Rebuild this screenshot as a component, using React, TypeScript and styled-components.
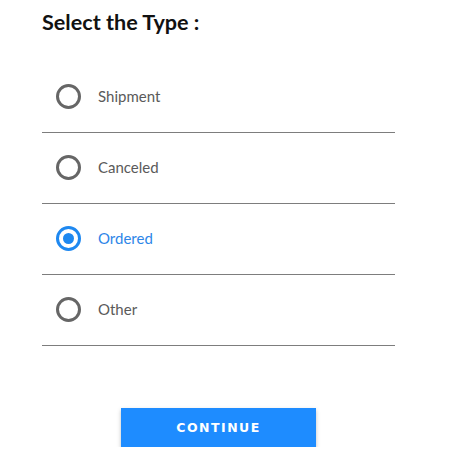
import { useState } from "react";
import styled, { createGlobalStyle } from "styled-components";

const GlobalStyle = createGlobalStyle`
  body {
    margin: 0;
    background: #ffffff;
    font-family: Lato, "Open Sans", sans-serif;
  }
`;

const Page = styled.div`
  padding: 8px 0 0 42px;
  width: 353px;
`;

const Title = styled.h2`
  margin: 0;
  font-size: 21.6px;
  font-weight: 700;
  color: #111111;
  line-height: 28px;
`;

const List = styled.div`
  margin-top: 26px;
  display: flex;
  flex-direction: column;
`;

const Row = styled.label`
  box-sizing: border-box;
  display: flex;
  align-items: center;
  height: 71px;
  padding: 0 0 2px 14px;
  border-bottom: 1.5px solid #7d7d7d;
  cursor: pointer;
`;

const Radio = styled.span<{ $checked: boolean }>`
  box-sizing: border-box;
  width: 25px;
  height: 25px;
  border-radius: 50%;
  border: 3px solid ${(p) => (p.$checked ? "#1e88f0" : "#666666")};
  display: flex;
  align-items: center;
  justify-content: center;
  &::after {
    content: "";
    width: 11px;
    height: 11px;
    border-radius: 50%;
    background: ${(p) => (p.$checked ? "#1e88f0" : "transparent")};
  }
`;

const Label = styled.span<{ $checked: boolean }>`
  margin-left: 17px;
  font-size: 15px;
  color: ${(p) => (p.$checked ? "#2e86e8" : "#5a5a5a")};
`;

const Footer = styled.div`
  display: flex;
  justify-content: center;
  margin-top: 62px;
`;

const Button = styled.button`
  width: 195px;
  height: 39px;
  border: none;
  padding: 0;
  background: #1e8cff;
  color: #ffffff;
  font-family: "DejaVu Sans", Lato, sans-serif;
  font-weight: 700;
  font-size: 12.5px;
  letter-spacing: 1.5px;
  box-shadow: 0 2px 4px rgba(0, 0, 0, 0.25);
  cursor: pointer;
`;

const options = ["Shipment", "Canceled", "Ordered", "Other"];

export default function App() {
  const [selected, setSelected] = useState("Ordered");
  return (
    <>
      <GlobalStyle />
      <Page>
        <Title>Select the Type :</Title>
        <List>
          {options.map((o) => (
            <Row key={o} onClick={() => setSelected(o)}>
              <Radio $checked={selected === o} />
              <Label $checked={selected === o}>{o}</Label>
            </Row>
          ))}
        </List>
        <Footer>
          <Button>CONTINUE</Button>
        </Footer>
      </Page>
    </>
  );
}
